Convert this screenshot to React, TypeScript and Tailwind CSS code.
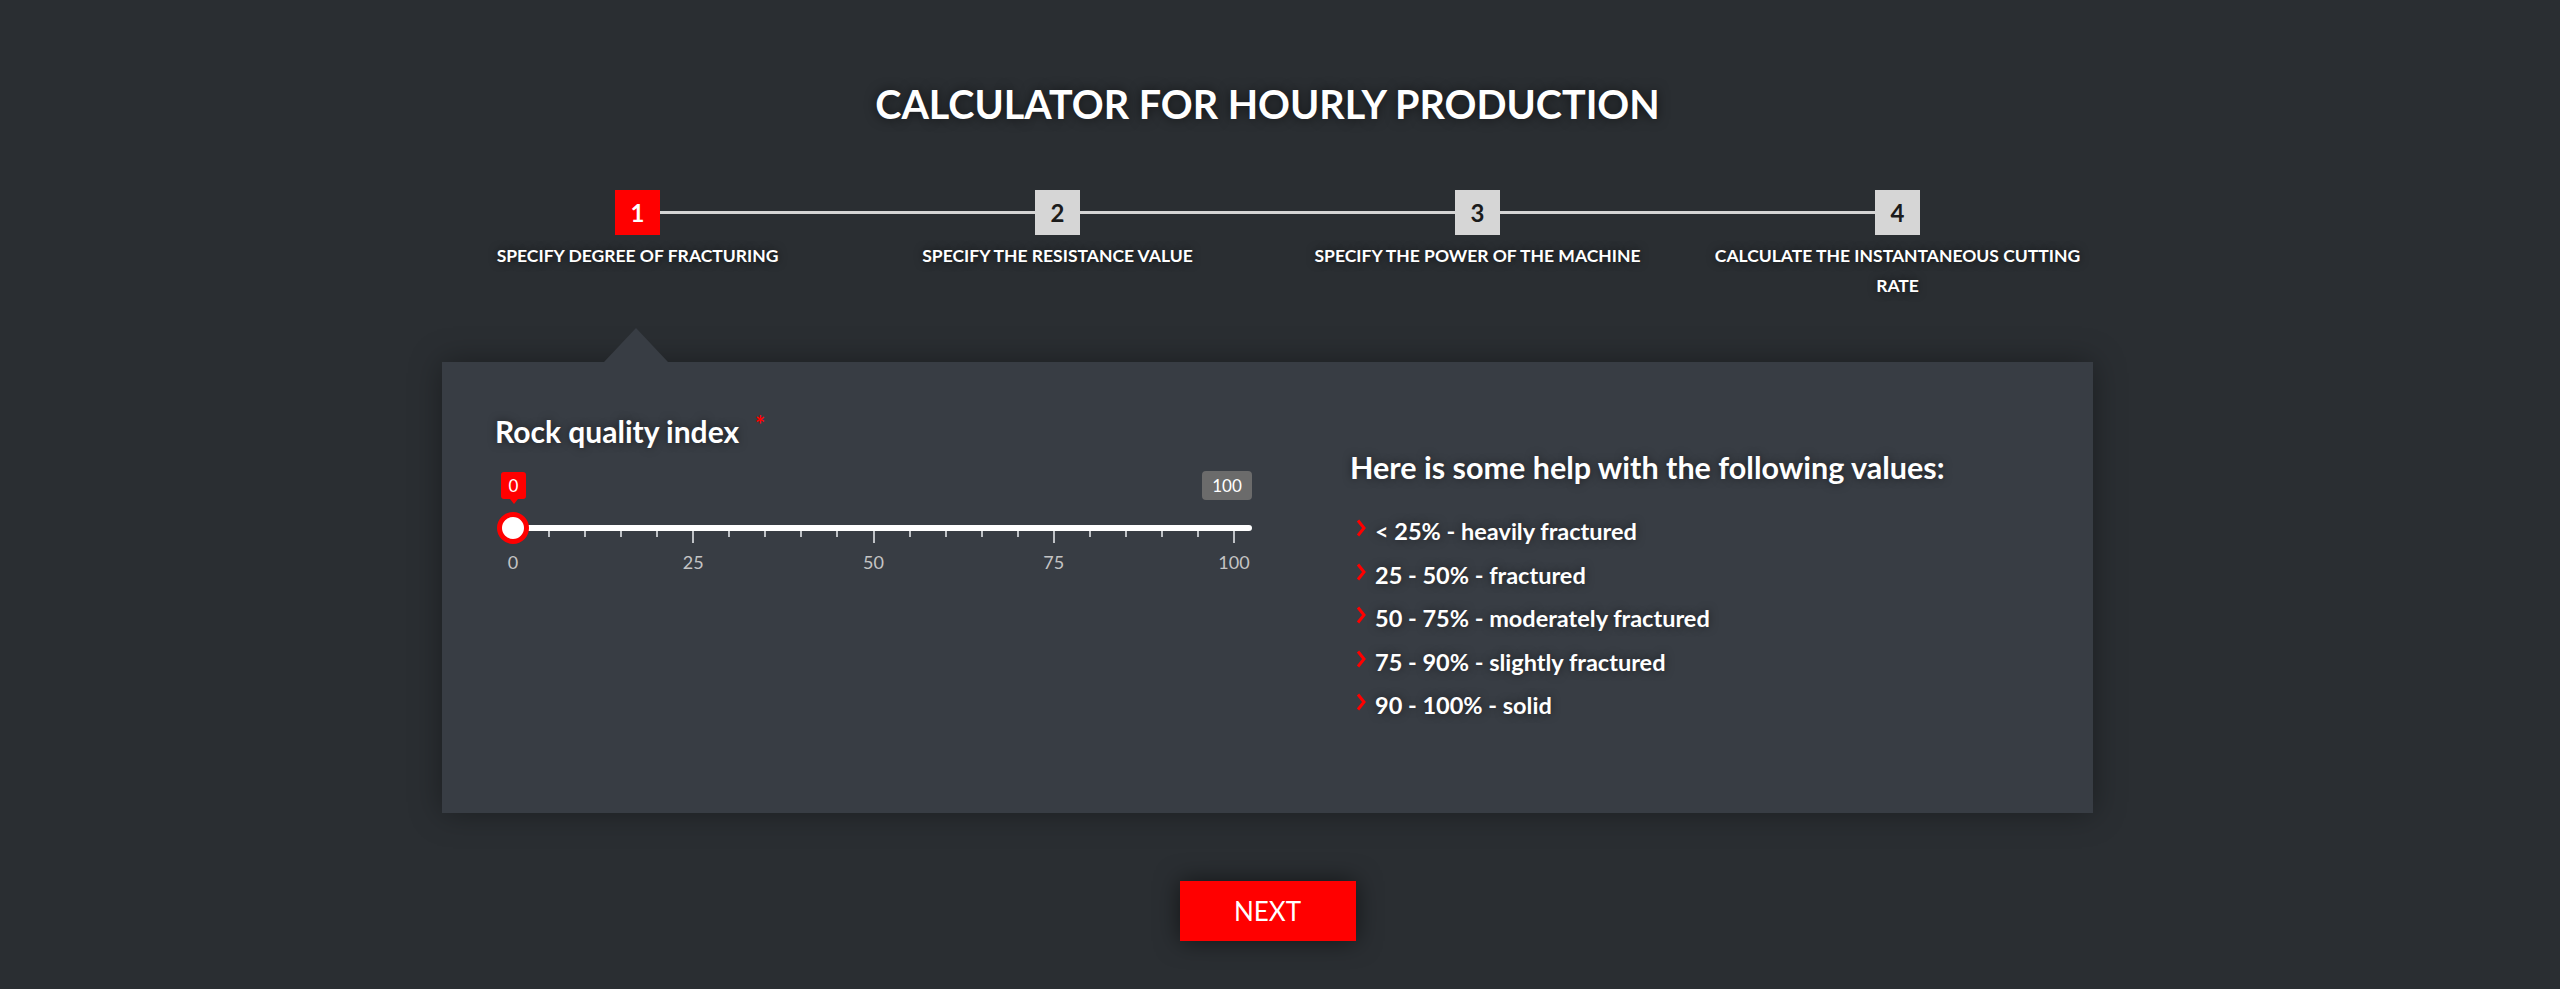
import React from "react";

const steps = [
  { n: 1, label: "SPECIFY DEGREE OF FRACTURING", active: true },
  { n: 2, label: "SPECIFY THE RESISTANCE VALUE" },
  { n: 3, label: "SPECIFY THE POWER OF THE MACHINE" },
  { n: 4, label: "CALCULATE THE INSTANTANEOUS CUTTING RATE" },
];

const help = [
  "< 25% - heavily fractured",
  "25 - 50% - fractured",
  "50 - 75% - moderately fractured",
  "75 - 90% - slightly fractured",
  "90 - 100% - solid",
];

const font = { fontFamily: "Lato, 'Open Sans', sans-serif" };

function Stepper() {
  return (
    <div className="relative mt-[62px] grid w-[1680px] grid-cols-4">
      {/* connector line behind the boxes */}
      <div className="absolute left-[210px] right-[210px] top-[21px] h-[3px] bg-[#d4d4d4]" />
      {steps.map((s) => (
        <div key={s.n} className="relative flex flex-col items-center">
          <div
            className={
              s.active
                ? "flex h-[45px] w-[45px] items-center justify-center bg-[#ff0000] text-[24px] font-bold text-white"
                : "flex h-[45px] w-[45px] items-center justify-center bg-[#d6d6d6] text-[24px] font-bold text-[#1c1c1c]"
            }
          >
            {s.n}
          </div>
          <p className="mt-[6px] max-w-[372px] text-center text-[17.5px] font-bold leading-[30px] text-white [text-shadow:0_0_8px_rgba(0,0,0,0.6)]">
            {s.label}
          </p>
        </div>
      ))}
    </div>
  );
}

function RangeSlider() {
  const ticks = Array.from({ length: 21 }, (_, i) => i * 5);
  return (
    <div className="relative mt-[18px] h-[110px] w-[757px]">
      {/* value badges */}
      <div className="absolute left-[6px] top-[5px] flex h-[27px] w-[25px] items-center justify-center rounded-[3px] bg-[#ff0000] text-[17px] text-white">
        0
        <div className="absolute -bottom-[5px] left-1/2 h-0 w-0 -translate-x-1/2 border-x-[4px] border-t-[5px] border-x-transparent border-t-[#ff0000]" />
      </div>
      <div className="absolute right-0 top-[4px] flex h-[29px] w-[50px] items-center justify-center rounded-[4px] bg-[#6b6b6b] text-[17px] text-white">
        100
      </div>
      {/* track */}
      <div className="absolute left-[18px] right-0 top-[58px] h-[6px] rounded-full bg-white" />
      {/* ticks + labels */}
      {ticks.map((t) => {
        const x = 18 + (t / 100) * 721;
        const major = t % 25 === 0;
        return (
          <React.Fragment key={t}>
            <div
              className={major ? "absolute top-[64px] h-[12px] w-[2px] bg-[#bfc2c6]" : "absolute top-[64px] h-[6px] w-[2px] bg-[#bfc2c6]"}
              style={{ left: x - 1 }}
            />
            {major && (
              <span
                className="absolute top-[85px] w-[40px] -translate-x-1/2 text-center text-[18px] leading-[20px] text-[#c4c4c4]"
                style={{ left: x }}
              >
                {t}
              </span>
            )}
          </React.Fragment>
        );
      })}
      {/* handle */}
      <div className="absolute left-[2px] top-[45px] h-[32px] w-[32px] rounded-full border-[5px] border-[#ff0000] bg-white" />
    </div>
  );
}

export default function App() {
  return (
    <div
      className="flex min-h-screen flex-col items-center bg-[#2a2e32] pb-[48px] pr-[25px] text-white"
      style={font}
    >
      <h1 className="mt-[80px] text-[39.5px] font-bold leading-[48px] text-white [text-shadow:0_0_12px_rgba(0,0,0,0.6)]">
        CALCULATOR FOR HOURLY PRODUCTION
      </h1>

      <Stepper />

      <div className="relative mt-[61px] flex h-[451px] w-[1651px] bg-[#383d44] shadow-[0_0_30px_rgba(0,0,0,0.35)]">
        <div className="absolute -top-[34px] left-[162px] h-0 w-0 border-x-[32px] border-b-[34px] border-x-transparent border-b-[#383d44]" />

        <div className="flex w-[810px] flex-col pl-[53px] pt-[51px]">
          <div className="flex items-start">
            <h2 className="text-[30px] font-bold leading-[36px] text-white [text-shadow:0_0_8px_rgba(0,0,0,0.5)]">
              Rock quality index
            </h2>
            <span className="ml-[16px] mt-[2px] text-[24px] font-bold leading-[20px] text-[#ff0000]">*</span>
          </div>
          <RangeSlider />
        </div>

        <div className="ml-[98px] flex flex-col pt-[86px]">
          <h3 className="text-[30.5px] font-bold leading-[38px] text-white [text-shadow:0_0_8px_rgba(0,0,0,0.5)]">
            Here is some help with the following values:
          </h3>
          <ul className="mt-[24px] flex flex-col">
            {help.map((h) => (
              <li key={h} className="flex h-[43.5px] items-start">
                <svg width="10" height="20" viewBox="0 0 10 20" className="ml-[6px] mt-[9px] shrink-0">
                  <polyline points="2,1.5 8,9 2,16.5" fill="none" stroke="#ff0000" strokeWidth="3" />
                </svg>
                <span className="ml-[9px] text-[23.5px] font-bold leading-[43px] text-white [text-shadow:0_0_8px_rgba(0,0,0,0.5)]">
                  {h}
                </span>
              </li>
            ))}
          </ul>
        </div>
      </div>

      <button className="mt-[68px] flex h-[60px] w-[176px] items-center justify-center bg-[#ff0000] text-[26px] text-white shadow-[0_0_24px_rgba(0,0,0,0.55)]">
        NEXT
      </button>
    </div>
  );
}
